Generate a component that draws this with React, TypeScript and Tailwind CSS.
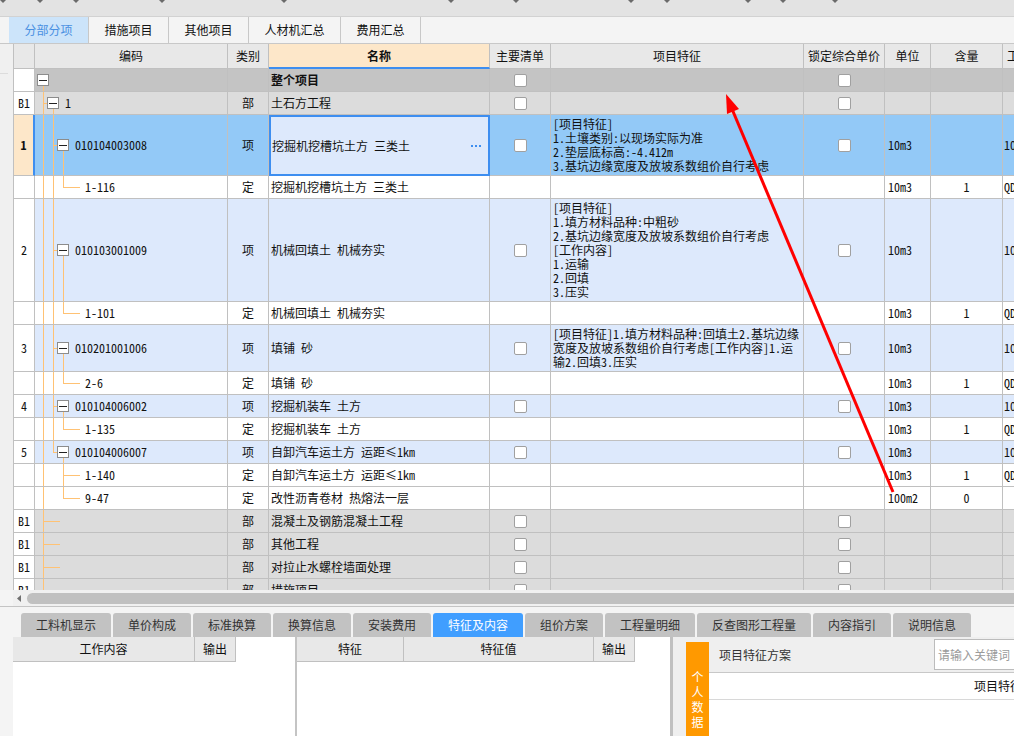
import React from 'react';

const MONO = "font-['Noto_Sans_Mono_CJK_SC','Liberation_Mono','Noto_Sans_CJK_SC',monospace]";
const SANS = "font-['Noto_Sans_CJK_SC','Noto_Sans',sans-serif]";
const COLS = 'grid w-max grid-cols-[21px_193px_41px_221px_61px_253px_81px_46px_72px_60px]';
const CELL = 'border-r border-b border-[#c0c0c0]';
const LINE = 'absolute w-px bg-[#ffc274]';
const HLINE = 'absolute top-1/2 h-px bg-[#ffc274]';

type Kind = 'root' | 'part' | 'item' | 'sub' | 'leaf';

interface Row {
  kind: Kind;
  no?: string;
  code?: string;
  type?: string;
  name: string;
  feat?: string[];
  unit?: string;
  qty?: string;
  extra?: string;
  h: string;
  sel?: boolean;
  lastChild?: boolean;
  lastItem?: boolean;
  afterItems?: boolean;
}

const rows: Row[] = [
  { kind: 'root', name: '整个项目', h: 'h-[23px]' },
  { kind: 'part', no: 'B1', code: '1', type: '部', name: '土石方工程', h: 'h-[23px]' },
  {
    kind: 'item', no: '1', code: '010104003008', type: '项', name: '挖掘机挖槽坑土方 三类土', sel: true,
    feat: ['[项目特征]', '1.土壤类别:以现场实际为准', '2.垫层底标高:-4.412m', '3.基坑边缘宽度及放坡系数组价自行考虑'],
    unit: '10m3', extra: '10', h: 'h-[61px]',
  },
  { kind: 'sub', code: '1-116', type: '定', name: '挖掘机挖槽坑土方 三类土', unit: '10m3', qty: '1', extra: 'QDL', h: 'h-[23px]', lastChild: true },
  {
    kind: 'item', no: '2', code: '010103001009', type: '项', name: '机械回填土 机械夯实',
    feat: ['[项目特征]', '1.填方材料品种:中粗砂', '2.基坑边缘宽度及放坡系数组价自行考虑', '[工作内容]', '1.运输', '2.回填', '3.压实'],
    unit: '10m3', extra: '10', h: 'h-[103px]',
  },
  { kind: 'sub', code: '1-101', type: '定', name: '机械回填土 机械夯实', unit: '10m3', qty: '1', extra: 'QDL', h: 'h-[23px]', lastChild: true },
  {
    kind: 'item', no: '3', code: '010201001006', type: '项', name: '填铺 砂',
    feat: ['[项目特征]1.填方材料品种:回填土2.基坑边缘', '宽度及放坡系数组价自行考虑[工作内容]1.运', '输2.回填3.压实'],
    unit: '10m3', extra: '10', h: 'h-[47px]',
  },
  { kind: 'sub', code: '2-6', type: '定', name: '填铺 砂', unit: '10m3', qty: '1', extra: 'QDL', h: 'h-[23px]', lastChild: true },
  { kind: 'item', no: '4', code: '010104006002', type: '项', name: '挖掘机装车 土方', unit: '10m3', extra: '10', h: 'h-[23px]' },
  { kind: 'sub', code: '1-135', type: '定', name: '挖掘机装车 土方', unit: '10m3', qty: '1', extra: 'QDL', h: 'h-[23px]', lastChild: true },
  { kind: 'item', no: '5', code: '010104006007', type: '项', name: '自卸汽车运土方 运距≤1㎞', unit: '10m3', extra: '10', h: 'h-[23px]', lastItem: true },
  { kind: 'sub', code: '1-140', type: '定', name: '自卸汽车运土方 运距≤1㎞', unit: '10m3', qty: '1', extra: 'QDL', h: 'h-[23px]', afterItems: true },
  { kind: 'sub', code: '9-47', type: '定', name: '改性沥青卷材 热熔法一层', unit: '100m2', qty: '0', h: 'h-[23px]', afterItems: true, lastChild: true },
  { kind: 'leaf', no: 'B1', type: '部', name: '混凝土及钢筋混凝土工程', h: 'h-[23px]' },
  { kind: 'leaf', no: 'B1', type: '部', name: '其他工程', h: 'h-[23px]' },
  { kind: 'leaf', no: 'B1', type: '部', name: '对拉止水螺栓墙面处理', h: 'h-[23px]' },
  { kind: 'leaf', no: 'B1', type: '部', name: '措施项目', h: 'h-[23px]' },
];

const rowBg = (r: Row) => {
  if (r.sel) return 'bg-[#93c9f7]';
  if (r.kind === 'root') return 'bg-[#c4c4c4]';
  if (r.kind === 'part' || r.kind === 'leaf') return 'bg-[#dcdcdc]';
  if (r.kind === 'item') return 'bg-[#dde9fc]';
  return 'bg-white';
};

const Check = () => <span className="block h-[13px] w-[13px] rounded-[2px] border border-[#a0a0a0] bg-white" />;

const Box = () => (
  <span className="relative flex h-[12px] w-[12px] shrink-0 items-center justify-center border border-[#8c8c8c] bg-white">
    <span className="h-px w-[8px] bg-[#222]" />
  </span>
);

function Tree({ r }: { r: Row }) {
  return (
    <div className={`relative flex items-center ${CELL} ${rowBg(r)}`}>
      {r.kind === 'root' ? (
        <div className={`${LINE} left-[8px] top-1/2 bottom-0`} />
      ) : (
        <div className={`${LINE} left-[8px] top-0 bottom-0`} />
      )}
      {r.kind === 'part' && (
        <>
          <div className={`${HLINE} left-[8px] w-[4px]`} />
          <div className={`${LINE} left-[18px] top-1/2 bottom-0`} />
          <div className="relative flex items-center gap-[6px] pl-[12px]">
            <Box />
            <span>{r.code}</span>
          </div>
        </>
      )}
      {r.kind === 'item' && (
        <>
          {r.lastItem ? (
            <div className={`${LINE} left-[18px] top-0 h-1/2`} />
          ) : (
            <div className={`${LINE} left-[18px] top-0 bottom-0`} />
          )}
          <div className={`${HLINE} left-[18px] w-[4px]`} />
          <div className={`${LINE} left-[28px] top-1/2 bottom-0`} />
          <div className="relative flex items-center gap-[6px] pl-[22px]">
            <Box />
            <span>{r.code}</span>
          </div>
        </>
      )}
      {r.kind === 'sub' && (
        <>
          {!r.afterItems && <div className={`${LINE} left-[18px] top-0 bottom-0`} />}
          {r.lastChild ? (
            <div className={`${LINE} left-[28px] top-0 h-1/2`} />
          ) : (
            <div className={`${LINE} left-[28px] top-0 bottom-0`} />
          )}
          <div className={`${HLINE} left-[28px] w-[17px]`} />
          <span className="relative pl-[50px]">{r.code}</span>
        </>
      )}
      {r.kind === 'leaf' && <div className={`${HLINE} left-[8px] w-[17px]`} />}
      {r.kind === 'root' && (
        <div className="relative pl-[2px]">
          <Box />
        </div>
      )}
    </div>
  );
}

function GridRow({ r }: { r: Row }) {
  const bg = rowBg(r);
  const hasCheck = r.kind !== 'sub';
  return (
    <div className={`${COLS} ${r.h}`}>
      <div
        className={`flex items-center justify-center ${CELL} ${
          r.sel ? 'border-r-2 border-r-[#3d8ef0] bg-[#fde7c9] font-bold' : 'bg-white'
        }`}
      >
        {r.no}
      </div>
      <Tree r={r} />
      <div className={`flex items-center justify-center ${CELL} ${bg}`}>{r.type}</div>
      {r.sel ? (
        <div className="flex items-center justify-between border-2 border-[#3d8ef0] bg-[#dde9fc] pl-[1px] pr-[7px]">
          <span>{r.name}</span>
          <span className="flex gap-[2px]">
            <span className="h-[2px] w-[2px] bg-[#3d8ef0]" />
            <span className="h-[2px] w-[2px] bg-[#3d8ef0]" />
            <span className="h-[2px] w-[2px] bg-[#3d8ef0]" />
          </span>
        </div>
      ) : (
        <div className={`flex items-center pl-[2px] ${CELL} ${bg} ${r.kind === 'root' ? 'font-bold' : ''}`}>{r.name}</div>
      )}
      <div className={`flex items-center justify-center ${CELL} ${bg}`}>{hasCheck && <Check />}</div>
      <div className={`flex flex-col justify-center pl-[2px] leading-[14px] ${CELL} ${bg}`}>
        {r.feat?.map((f, i) => (
          <div key={i} className="whitespace-nowrap">{f}</div>
        ))}
      </div>
      <div className={`flex items-center justify-center ${CELL} ${bg}`}>{hasCheck && <Check />}</div>
      <div className={`flex items-center pl-[3px] ${CELL} ${bg}`}>{r.unit}</div>
      <div className={`flex items-center justify-center ${CELL} ${bg}`}>{r.qty}</div>
      <div className={`flex items-center pl-[1px] ${CELL} ${bg}`}>{r.extra}</div>
    </div>
  );
}

const headers = ['', '编码', '类别', '名称', '主要清单', '项目特征', '锁定综合单价', '单位', '含量', '工程量表达式'];

const topTabs = [
  { label: '分部分项', w: 'w-[80px]' },
  { label: '措施项目', w: 'w-[80px]' },
  { label: '其他项目', w: 'w-[80px]' },
  { label: '人材机汇总', w: 'w-[92px]' },
  { label: '费用汇总', w: 'w-[80px]' },
];

const bottomTabs = [
  { label: '工料机显示', w: 'w-[90px]' },
  { label: '单价构成', w: 'w-[78px]' },
  { label: '标准换算', w: 'w-[78px]' },
  { label: '换算信息', w: 'w-[78px]' },
  { label: '安装费用', w: 'w-[78px]' },
  { label: '特征及内容', w: 'w-[90px]' },
  { label: '组价方案', w: 'w-[78px]' },
  { label: '工程量明细', w: 'w-[90px]' },
  { label: '反查图形工程量', w: 'w-[114px]' },
  { label: '内容指引', w: 'w-[78px]' },
  { label: '说明信息', w: 'w-[78px]' },
];

const marks = [3, 40, 76, 162, 284, 451, 516, 631, 667, 748, 783, 835];

export default function App() {
  return (
    <div className={`relative flex h-[736px] w-[1014px] flex-col overflow-hidden bg-[#f4f4f4] text-[12px] text-[#111] ${SANS}`}>
      {/* toolbar strip */}
      <div className="h-[17px] shrink-0 border-b border-[#d2d2d2] bg-[#e3e3e3]">
        <svg width="1014" height="16">
          {marks.map(x => (
            <polygon key={x} points={`${x - 3},0 ${x + 3},0 ${x},3`} fill="#6a6a6a" />
          ))}
        </svg>
      </div>

      {/* page tabs */}
      <div className="flex h-[27px] shrink-0 border-b border-[#c8c8c8] bg-[#f4f4f4] pl-[9px]">
        {topTabs.map((t, i) => (
          <div
            key={t.label}
            className={`flex items-center justify-center border-r border-[#c8c8c8] ${t.w} ${
              i === 0 ? 'bg-[#cce4fa] text-[#4a90e2]' : 'text-[#111]'
            }`}
          >
            {t.label}
          </div>
        ))}
      </div>

      {/* main grid */}
      <div className="flex h-[546px] shrink-0">
        <div className="w-[13px] shrink-0 bg-[#f0f0f0] pt-[29px]">
          <div className="h-px w-[8px] bg-[#dcdcdc]" />
        </div>
        <div className={`min-w-0 flex-1 overflow-hidden border-l border-[#c0c0c0] bg-white ${MONO}`}>
          <div className={`${COLS} h-[25px]`}>
            {headers.map((h, i) => (
              <div
                key={i}
                className={`flex items-center ${i === 9 ? 'pl-[4px]' : 'justify-center'} ${CELL} ${
                  i === 3 ? 'border-b-2 border-b-[#3d8ef0] bg-[#fde7c9] font-bold' : 'bg-[#e8e8e8]'
                } whitespace-nowrap`}
              >
                {h}
              </div>
            ))}
          </div>
          {rows.map((r, i) => (
            <GridRow key={i} r={r} />
          ))}
        </div>
      </div>

      {/* horizontal scrollbar */}
      <div className="flex h-[17px] shrink-0 border-b border-[#c4c4c4]">
        <div className="w-[13px] shrink-0 bg-[#f4f4f4]" />
        <div className="flex flex-1 items-center bg-[#f0f0f0] pt-[1px]">
          <svg width="14" height="11" className="shrink-0">
            <polygon points="8,2 8,9 4,5.5" fill="#707070" />
          </svg>
          <div className="h-[11px] flex-1 rounded-l-full bg-[#c0c0c0]" />
        </div>
      </div>

      {/* bottom tabs */}
      <div className="flex h-[30px] shrink-0 items-end bg-[#f4f4f4] pl-[21px]">
        <div className="flex gap-[2px]">
          {bottomTabs.map(t => (
            <div
              key={t.label}
              className={`flex h-[24px] items-center justify-center rounded-t-[3px] ${t.w} ${
                t.label === '特征及内容' ? 'bg-[#409eff] text-white' : 'bg-[#c2c2c2] text-[#333]'
              }`}
            >
              {t.label}
            </div>
          ))}
        </div>
      </div>

      {/* bottom panels */}
      <div className="flex min-h-0 flex-1">
        <div className="w-[13px] shrink-0 bg-[#f4f4f4]" />
        <div className="w-[282px] shrink-0 bg-white">
          <div className="flex h-[25px]">
            <div className="flex w-[182px] items-center justify-center border-r border-b border-[#c0c0c0] bg-[#e8e8e8]">工作内容</div>
            <div className="flex w-[41px] items-center justify-center border-r border-b border-[#c0c0c0] bg-[#e8e8e8]">输出</div>
          </div>
        </div>
        <div className="w-[2px] shrink-0 bg-[#c4c4c4]" />
        <div className="w-[373px] shrink-0 bg-white">
          <div className="flex h-[25px]">
            <div className="flex w-[107px] items-center justify-center border-r border-b border-[#c0c0c0] bg-[#e8e8e8]">特征</div>
            <div className="flex w-[190px] items-center justify-center border-r border-b border-[#c0c0c0] bg-[#e8e8e8]">特征值</div>
            <div className="flex w-[41px] items-center justify-center border-r border-b border-[#c0c0c0] bg-[#e8e8e8]">输出</div>
          </div>
        </div>
        <div className="w-[3px] shrink-0 bg-[#c0c0c0]" />
        <div className="flex min-w-0 flex-1 bg-[#efefef] pl-[13px]">
          <div className="mt-[5px] flex w-[23px] shrink-0 flex-col items-center bg-[#ff9900] pt-[27px] leading-[15px] text-white">
            <span>个</span>
            <span>人</span>
            <span>数</span>
            <span>据</span>
          </div>
          <div className="flex min-w-0 flex-1 flex-col overflow-hidden">
            <div className="flex h-[36px] shrink-0 items-center border-b border-[#c8c8c8] pl-[10px] text-[#333]">
              <span className="whitespace-nowrap">项目特征方案</span>
              <div className="ml-auto flex h-[31px] w-[80px] shrink-0 items-center overflow-hidden border border-r-0 border-[#bcbcbc] bg-white pl-[3px] whitespace-nowrap text-[#9a9a9a]">
                请输入关键词
              </div>
            </div>
            <div className="flex-1 bg-white">
              <div className="flex h-[27px] items-center border-b border-[#d8d8d8] pl-[265px] whitespace-nowrap">项目特征</div>
            </div>
          </div>
        </div>
      </div>

      {/* annotation arrow */}
      <svg className="pointer-events-none absolute left-0 top-0" width="1014" height="736">
        <line x1="893" y1="492" x2="732" y2="109" stroke="#ff0000" strokeWidth="3" />
        <polygon points="726,94 739,109 727,114" fill="#ff0000" />
      </svg>
    </div>
  );
}
